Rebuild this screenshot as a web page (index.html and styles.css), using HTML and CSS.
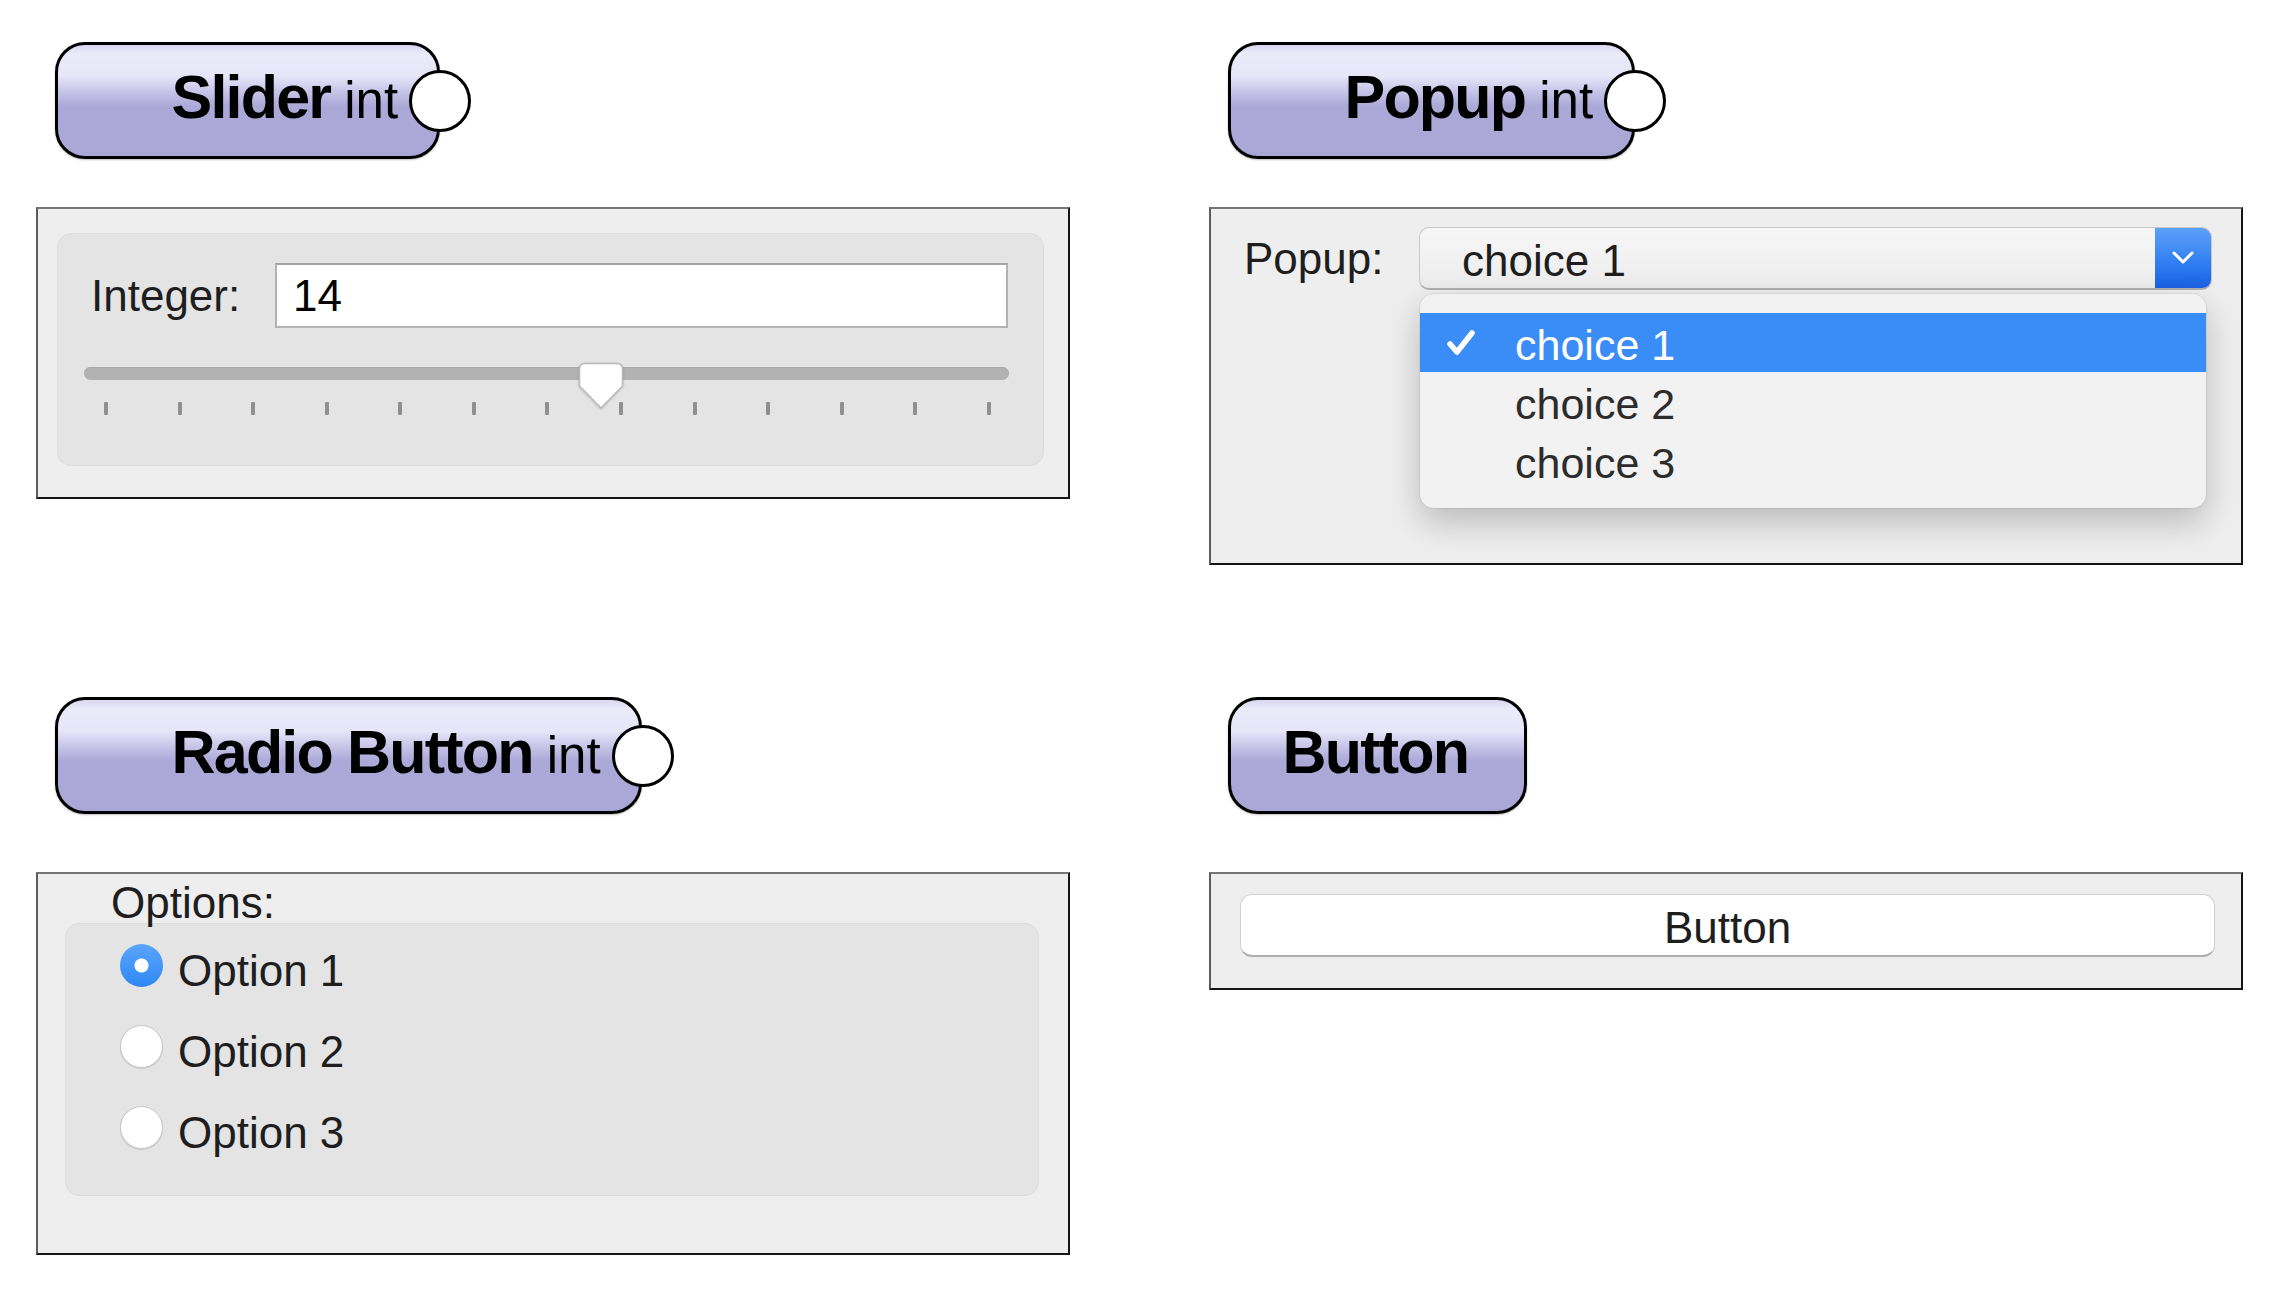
FILE: index.html
```html
<!DOCTYPE html>
<html>
<head>
<meta charset="utf-8">
<title>Widgets</title>
<link rel="stylesheet" href="styles.css">
</head>
<body>
<div class="page">

  <section class="cell">
    <div class="node">
      <span class="node-label"><span class="title">Slider</span><span class="type">int</span></span>
      <span class="port"></span>
    </div>
    <div class="panel panel-slider">
      <div class="group group-slider">
        <div class="field-row">
          <span class="field-label">Integer:</span>
          <div class="text-input">14</div>
        </div>
        <div class="slider">
          <div class="track"></div>
          <div class="ticks">
            <span class="tick"></span><span class="tick"></span><span class="tick"></span><span class="tick"></span><span class="tick"></span><span class="tick"></span><span class="tick"></span><span class="tick"></span><span class="tick"></span><span class="tick"></span><span class="tick"></span><span class="tick"></span><span class="tick"></span>
          </div>
          <svg class="thumb" width="46" height="48" viewBox="0 0 46 48">
            <path d="M7 1.5 H39 Q44.5 1.5 44.5 7 V24 L23 46 L1.5 24 V7 Q1.5 1.5 7 1.5 Z" fill="#ffffff" stroke="#b9b9b9" stroke-width="1.5"/>
          </svg>
        </div>
      </div>
    </div>
  </section>

  <section class="cell">
    <div class="node">
      <span class="node-label"><span class="title">Popup</span><span class="type">int</span></span>
      <span class="port"></span>
    </div>
    <div class="panel panel-popup">
      <span class="popup-label">Popup:</span>
      <div class="select-wrap">
        <div class="select">
          <span class="select-value">choice 1</span>
          <span class="select-arrow">
            <svg width="26" height="16" viewBox="0 0 26 16"><path d="M4 3 L13 12 L22 3" fill="none" stroke="#ffffff" stroke-width="3" stroke-linecap="round" stroke-linejoin="round"/></svg>
          </span>
        </div>
        <div class="menu">
          <div class="menu-item selected">
            <span class="check"><svg width="30" height="28" viewBox="0 0 30 28"><path d="M4 15 L11 23 L26 4" fill="none" stroke="#ffffff" stroke-width="5.5" stroke-linecap="round" stroke-linejoin="round"/></svg></span>
            <span class="item-text">choice 1</span>
          </div>
          <div class="menu-item"><span class="check"></span><span class="item-text">choice 2</span></div>
          <div class="menu-item"><span class="check"></span><span class="item-text">choice 3</span></div>
        </div>
      </div>
    </div>
  </section>

  <section class="cell cell-low">
    <div class="node">
      <span class="node-label"><span class="title">Radio Button</span><span class="type">int</span></span>
      <span class="port"></span>
    </div>
    <div class="panel panel-radio">
      <div class="options-label">Options:</div>
      <div class="group group-radio">
        <div class="radio-row"><span class="radio checked"></span><span>Option 1</span></div>
        <div class="radio-row"><span class="radio"></span><span>Option 2</span></div>
        <div class="radio-row"><span class="radio"></span><span>Option 3</span></div>
      </div>
    </div>
  </section>

  <section class="cell cell-low">
    <div class="node node-plain">
      <span class="node-label"><span class="title">Button</span></span>
    </div>
    <div class="panel panel-button">
      <div class="push-button">Button</div>
    </div>
  </section>

</div>
</body>
</html>
```

FILE: styles.css
```css
html, body {
  margin: 0;
  padding: 0;
  background: #ffffff;
}

body {
  font-family: "Liberation Sans", Arial, sans-serif;
  color: #1e1e1e;
}

.page {
  display: grid;
  grid-template-columns: 1034px 1034px;
  column-gap: 139px;
  row-gap: 132px;
  padding: 42px 0 0 36px;
  align-items: start;
}

.cell {
  display: flex;
  flex-direction: column;
  align-items: flex-start;
}

/* ---------- node headers ---------- */
.node {
  display: inline-flex;
  align-items: center;
  box-sizing: border-box;
  height: 117px;
  margin-left: 19px;
  margin-bottom: 48px;
  padding-left: 113.5px;
  border: 3.5px solid #000;
  border-radius: 30px;
  background: linear-gradient(to bottom,
    #d9d7ef 0%,
    #ebeafa 8%,
    #e7e6f8 28%,
    #c7c4e8 42%,
    #aca8d8 55%,
    #aaa6d6 100%);
  box-shadow: 0 1px 2px rgba(0, 0, 0, 0.25);
}

.cell-low .node {
  margin-bottom: 58px;
}

.node-plain {
  padding: 0 56px 0 51.5px;
}

.node-label {
  display: flex;
  align-items: baseline;
  gap: 14px;
  margin-bottom: 6px;
  white-space: nowrap;
}

.title {
  font-weight: bold;
  font-size: 61px;
  line-height: 1;
  letter-spacing: -1.8px;
  color: #000;
}

.type {
  font-size: 51px;
  line-height: 1;
  color: #000;
}

.port {
  flex-shrink: 0;
  box-sizing: border-box;
  width: 62px;
  height: 62px;
  margin-left: 11px;
  margin-right: -34.5px;
  border: 3.5px solid #000;
  border-radius: 50%;
  background: #ffffff;
}

/* ---------- panels ---------- */
.panel {
  align-self: stretch;
  box-sizing: border-box;
  background: #eeeeee;
  border: 2px solid;
  border-color: #767676 #151515 #151515 #5c5c5c;
  font-size: 44px;
}

.group {
  background: #e4e4e4;
  border: 1px solid #dcdcdc;
  border-radius: 14px;
}

/* slider panel */
.panel-slider {
  padding: 24px 24px 31px 19px;
}

.group-slider {
  padding: 29px 35px 50px 33px;
}

.field-row {
  display: flex;
  align-items: center;
}

.field-label {
  width: 184px;
  flex-shrink: 0;
  line-height: 65px;
}

.text-input {
  flex: 1;
  box-sizing: border-box;
  height: 65px;
  line-height: 61px;
  padding-left: 16px;
  background: #ffffff;
  border: 2px solid #b3b3b3;
  border-top-color: #a4a4a4;
  color: #000;
}

.slider {
  position: relative;
  margin: 39px -1px 0 -7px;
}

.track {
  height: 13px;
  border-radius: 7px;
  background: #b2b2b2;
  box-shadow: inset 0 1px 0 #a8a8a8;
}

.ticks {
  display: flex;
  justify-content: space-between;
  margin-top: 22px;
  padding: 0 18px 0 20px;
}

.tick {
  width: 4px;
  height: 13px;
  border-radius: 1px;
  background: #8f8f8f;
}

.thumb {
  position: absolute;
  left: 494px;
  top: -5px;
  filter: drop-shadow(0 1px 1px rgba(0, 0, 0, 0.15));
}

/* popup panel */
.panel-popup {
  display: flex;
  align-items: flex-start;
  padding: 18px 29px 55px 33px;
}

.popup-label {
  width: 175px;
  flex-shrink: 0;
  line-height: 63px;
}

.select-wrap {
  flex: 1;
  display: flex;
  flex-direction: column;
}

.select {
  display: flex;
  align-items: stretch;
  box-sizing: border-box;
  height: 63px;
  border: 1px solid #c8c8c8;
  border-bottom: 2px solid #b0b0b0;
  border-radius: 10px;
  overflow: hidden;
  background: linear-gradient(to bottom, #f7f7f7, #ececec);
}

.select-value {
  flex: 1;
  padding-left: 42px;
  padding-top: 6px;
  line-height: 54px;
  color: #1e1e1e;
}

.select-arrow {
  width: 56px;
  display: flex;
  align-items: center;
  justify-content: center;
  background: linear-gradient(to bottom, #5da0f9, #2f7ef1 60%, #1a60e2);
}

.menu {
  margin: 4px 6px 0 1px;
  padding: 19px 0 18px;
  background: #f2f2f2;
  border-radius: 14px;
  box-shadow: 0 0 0 1px rgba(0, 0, 0, 0.06), 0 14px 34px rgba(0, 0, 0, 0.22);
}

.menu-item {
  display: flex;
  align-items: center;
  height: 59px;
  padding-left: 26px;
  font-size: 43px;
  color: #2c2c2c;
}

.menu-item.selected {
  background: #3a8cf7;
  color: #ffffff;
}

.item-text {
  padding-top: 5px;
}

.check {
  width: 30px;
  height: 28px;
  margin-right: 39px;
  flex-shrink: 0;
}

.check svg {
  display: block;
}

/* radio panel */
.panel-radio {
  padding: 7px 29px 57px 27px;
}

.options-label {
  line-height: 44px;
  padding-left: 46px;
}

.group-radio {
  margin-top: -2px;
  padding: 5px 0 23px 54px;
}

.radio-row {
  display: flex;
  align-items: center;
  gap: 15px;
  height: 81px;
  color: #1e1e1e;
}

.radio-row span:last-child {
  padding-top: 3px;
}

.radio {
  flex-shrink: 0;
  box-sizing: border-box;
  width: 43px;
  height: 43px;
  margin-bottom: 8px;
  border-radius: 50%;
  background: #ffffff;
  border: 1px solid #c6c6c6;
  box-shadow: 0 1px 1px rgba(0, 0, 0, 0.12);
}

.radio.checked {
  border: none;
  background:
    radial-gradient(circle, #ffffff 0, #ffffff 6.5px, rgba(255, 255, 255, 0) 7.5px),
    linear-gradient(to bottom, #5aa5fb, #2f87f5);
  box-shadow: none;
}

/* button panel */
.panel-button {
  padding: 20px 26px 31px 29px;
}

.push-button {
  box-sizing: border-box;
  height: 63px;
  padding-top: 5px;
  display: flex;
  align-items: center;
  justify-content: center;
  background: #ffffff;
  border: 1px solid #d0d0d0;
  border-bottom: 2px solid #adadad;
  border-radius: 12px;
  color: #1e1e1e;
}
```
